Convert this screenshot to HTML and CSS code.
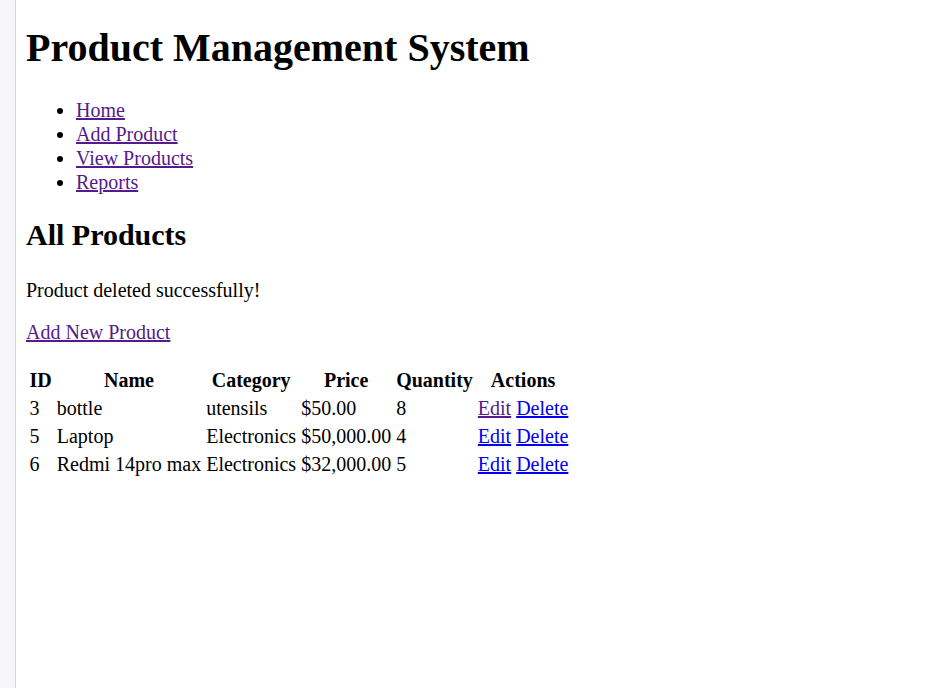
FILE: index.html
```html
<!DOCTYPE html>
<html lang="en">
<head>
<meta charset="utf-8">
<title>Product Management System</title>
<link rel="stylesheet" href="styles.css">
</head>
<body>
<div class="sidebar"></div>
<main class="page">
  <h1>Product Management System</h1>
  <nav>
    <ul>
      <li><a class="visited" href="#">Home</a></li>
      <li><a class="visited" href="#">Add Product</a></li>
      <li><a class="visited" href="#">View Products</a></li>
      <li><a class="visited" href="#">Reports</a></li>
    </ul>
  </nav>
  <h2>All Products</h2>
  <p class="message">Product deleted successfully!</p>
  <p class="add"><a class="visited" href="#">Add New Product</a></p>
  <table class="products">
    <thead>
      <tr><th>ID</th><th>Name</th><th>Category</th><th>Price</th><th>Quantity</th><th>Actions</th></tr>
    </thead>
    <tbody>
      <tr><td>3</td><td>bottle</td><td>utensils</td><td>$50.00</td><td>8</td><td><a class="visited" href="#">Edit</a> <a href="#">Delete</a></td></tr>
      <tr><td>5</td><td>Laptop</td><td>Electronics</td><td>$50,000.00</td><td>4</td><td><a href="#">Edit</a> <a href="#">Delete</a></td></tr>
      <tr><td>6</td><td>Redmi 14pro max</td><td>Electronics</td><td>$32,000.00</td><td>5</td><td><a href="#">Edit</a> <a href="#">Delete</a></td></tr>
    </tbody>
  </table>
</main>
</body>
</html>
```
FILE: styles.css
```css
html, body {
  margin: 0;
  height: 100%;
}
body {
  display: flex;
  font-family: "Liberation Serif", "Times New Roman", serif;
  font-size: 20px;
  line-height: 23px;
  color: #000;
  background: #fff;
}
.sidebar {
  width: 15px;
  flex: none;
  background: #f7f7f9;
  border-right: 1px solid #d4d4d8;
}
.page {
  padding: 0 10px;
  flex: 1;
}
h1 {
  font-size: 40px;
  line-height: 46px;
  margin: 25px 0 27px;
}
ul {
  margin: 0 0 24.4px;
  padding-left: 50px;
  line-height: 24px;
}
h2 {
  font-size: 30px;
  line-height: 34.5px;
  margin: 0 0 26.5px;
}
p {
  margin: 0 0 20px;
}
.message {
  margin-bottom: 19px;
}
a {
  color: #0000ee;
}
a.visited {
  color: #551a8b;
}
.add {
  margin-bottom: 21.5px;
}
.products {
  border-spacing: 2px;
}
.products th,
.products td {
  padding: 1.5px;
}
.products td {
  text-align: left;
}
```
